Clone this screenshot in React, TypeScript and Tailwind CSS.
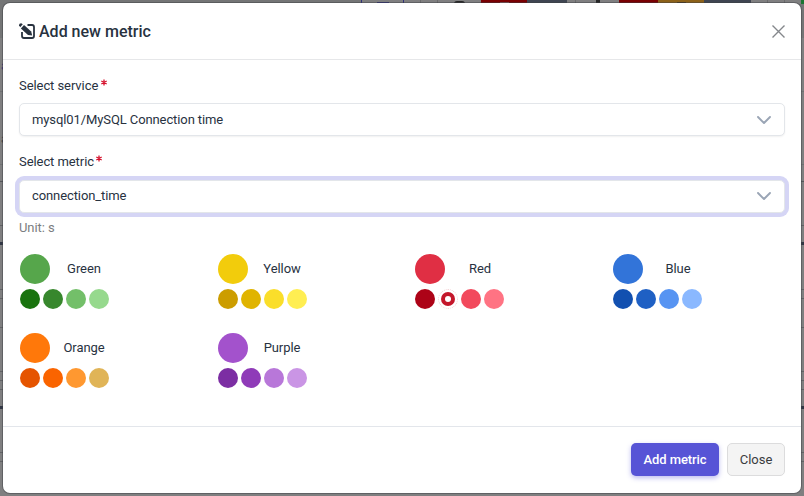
import type { ReactNode } from "react";

type Swatch = { name: string; main: string; shades: string[]; selected?: number };

const swatches: Swatch[] = [
  { name: "Green", main: "bg-[#56a64b]", shades: ["bg-[#19730e]", "bg-[#37872d]", "bg-[#73bf69]", "bg-[#96d98d]"] },
  { name: "Yellow", main: "bg-[#f2cc0c]", shades: ["bg-[#cc9d00]", "bg-[#e0b400]", "bg-[#fade2a]", "bg-[#ffee52]"] },
  { name: "Red", main: "bg-[#e02f44]", shades: ["bg-[#ad0317]", "bg-[#c4162a]", "bg-[#f2495c]", "bg-[#ff7383]"], selected: 1 },
  { name: "Blue", main: "bg-[#3274d9]", shades: ["bg-[#1250b0]", "bg-[#1f60c4]", "bg-[#5794f2]", "bg-[#8ab8ff]"] },
  { name: "Orange", main: "bg-[#ff780a]", shades: ["bg-[#e55400]", "bg-[#fa6400]", "bg-[#ff9830]", "bg-[#e0b457]"] },
  { name: "Purple", main: "bg-[#a352cc]", shades: ["bg-[#7c2ea3]", "bg-[#8f3bb8]", "bg-[#b877d9]", "bg-[#ca95e5]"] },
];

function Backdrop() {
  return (
    <div className="absolute inset-0 flex flex-col bg-[#7f7f80]">
      <div className="flex h-1 shrink-0">
        <div className="w-[361px] bg-[#747576]" />
        <div className="flex w-[43px] justify-center border-x border-[#30307a]">
          <span className="mt-[2px] h-[2px] w-[12px] bg-[#30307a]" />
        </div>
        <div className="w-[17px] border-r border-[#6b6b6c]" />
        <div className="w-[17px] border-r border-[#6b6b6c]" />
        <div className="flex w-[43px] justify-center">
          <span className="mt-px h-[3px] w-[11px] rounded-t-sm bg-[#272727]" />
        </div>
        <div className="flex w-[46px] justify-center bg-[#790002]">
          <span className="mt-[2px] h-[2px] w-[9px] bg-[#8f5a5b]" />
        </div>
        <div className="w-[40px] bg-[#3f4551]" />
        <div className="w-[9px] border-r border-[#6b6b6c]" />
        <div className="flex w-[43px] justify-center">
          <span className="h-1 w-[4px] bg-[#272727]" />
        </div>
        <div className="w-[39px] bg-[#790002]" />
        <div className="flex w-[46px] justify-center bg-[#8c6119]">
          <span className="mt-[2px] h-[2px] w-[9px] bg-[#4c3a1c]" />
        </div>
        <div className="w-[47px] bg-[#3f4551]" />
        <div className="w-[17px] border-r border-[#6b6b6c]" />
        <div className="w-[17px] border-r border-[#6b6b6c]" />
        <div className="flex grow justify-end">
          <span className="h-1 w-[3px] bg-[#1b7431]" />
        </div>
      </div>
      <div className="h-[34px] shrink-0 bg-[#747576]" />
      <div className="h-[54px] shrink-0 border-b border-[#707173] pl-px pt-[19px] text-[13px] leading-[18px] text-[#303079]">a</div>
      <div className="h-[73px] shrink-0 border-b border-[#707173] pl-px pt-[38px] text-[13px] leading-[18px] text-[#353c48]">a</div>
      <div className="h-[17px] shrink-0 border-b border-[#55575b]" />
      <div className="h-[44px] shrink-0 border-b border-[#606164]" />
      <div className="h-[19px] shrink-0 border-b-[3px] border-[#303644]" />
      <div className="h-[45px] shrink-0 border-b border-[#626366]" />
      <div className="h-[9px] shrink-0 border-b border-[#626366]" />
      <div className="h-[29px] shrink-0 border-b border-[#626366]" />
      <div className="h-[44px] shrink-0 border-b border-[#626366]" />
      <div className="h-[9px] shrink-0 border-b border-[#626366]" />
      <div className="h-[9px] shrink-0 border-b border-[#626366]" />
      <div className="h-[19px] shrink-0 border-b-[3px] border-[#303644]" />
      <div className="h-[44px] shrink-0 border-b border-[#626366]" />
      <div className="h-[9px] shrink-0 border-b border-[#626366]" />
    </div>
  );
}

function Label({ children }: { children: ReactNode }) {
  return (
    <div className="flex h-[18px] items-center leading-[18px] tracking-[-0.07px]">
      {children}
      <svg width="6" height="7" viewBox="0 0 6 7" className="-mt-[8px] ml-[2.5px]" stroke="#d6102c" strokeWidth="1.3">
        <path d="M3 .5v6M.3 2l5.4 3M.3 5l5.4-3" />
      </svg>
    </div>
  );
}

function Select({ value, focused }: { value: string; focused?: boolean }) {
  return (
    <div
      className={`flex h-[33px] items-center justify-between rounded-[5px] border border-[#e3e6ea] bg-white pl-3 pr-[13px] tracking-[-0.1px] ${
        focused ? "pb-[2px] shadow-[0_0_0_4px_#d5d5f5]" : "shadow-[0_1px_2px_rgba(0,0,0,0.06)]"
      }`}
    >
      <span>{value}</span>
      <svg width="14" height="8" viewBox="0 0 14 8" fill="none" stroke="#9aa5b5" strokeWidth="1.9" strokeLinecap="round" strokeLinejoin="round">
        <path d="M1 1l6 6 6-6" />
      </svg>
    </div>
  );
}

function ColorGroup({ swatch }: { swatch: Swatch }) {
  return (
    <div className="h-[79px]">
      <div className="flex items-center">
        <div className={`size-[30px] rounded-full ${swatch.main}`} />
        <div className={`ml-1 text-center tracking-[-0.07px] ${swatch.name === "Red" || swatch.name === "Blue" ? "w-[62px]" : "w-[60px]"}`}>
          {swatch.name}
        </div>
      </div>
      <div className="mt-[5px] flex gap-[3px]">
        {swatch.shades.map((shade, i) =>
          i === swatch.selected ? (
            <div key={shade} className="flex size-5 items-center justify-center rounded-full border border-dotted border-[#f3cdd1]">
              <div className={`flex size-[14px] items-center justify-center rounded-full ${shade}`}>
                <div className="size-[6px] rounded-full bg-white" />
              </div>
            </div>
          ) : (
            <div key={shade} className={`size-5 rounded-full ${shade}`} />
          ),
        )}
      </div>
    </div>
  );
}

export default function App() {
  return (
    <div className="relative h-[496px] w-[804px] overflow-hidden p-[3px] font-[Roboto,sans-serif] text-[13px] text-[#28323f]">
      <Backdrop />
      <div className="relative flex h-[490px] flex-col rounded-[7px] bg-white shadow-[0_0_0_1px_rgba(60,62,66,0.45)]">
        <header className="flex h-[57px] shrink-0 items-center border-b border-[#e6e7e9] pl-4 pr-4">
          <svg width="16" height="16" viewBox="0 0 16 16" fill="none">
            <path d="M8.5 2H13Q15 2 15 4V13Q15 15 13 15H5Q3 15 3 13V9" stroke="#28323f" strokeWidth="1.8" />
            <path d="M5 2 12.2 8.4 13.2 12.6 9 12 1.9 5.4z" fill="#28323f" />
            <path d="M0 2.2Q0 .3 2.2 .3L3.8 1.3 1.2 4.3z" fill="#28323f" />
          </svg>
          <h1 className="ml-1 mt-px text-[16px] font-medium leading-5">Add new metric</h1>
          <svg width="13" height="13" viewBox="0 0 13 13" fill="none" stroke="#84878b" strokeWidth="1.4" className="ml-auto">
            <path d="M.5.5l12 12M12.5.5l-12 12" />
          </svg>
        </header>
        <main className="flex grow flex-col px-4 pt-[17px]">
          <Label>Select service</Label>
          <div className="mt-2">
            <Select value="mysql01/MySQL Connection time" />
          </div>
          <div className="mt-[17px]">
            <Label>Select metric</Label>
          </div>
          <div className="mt-[9px]">
            <Select value="connection_time" focused />
          </div>
          <div className="mt-[5px] h-[20px] leading-[20px] tracking-[-0.07px] text-[#7b7d81]">Unit: s</div>
          <div className="ml-px mt-4 grid grid-cols-[198px_197px_198px_auto]">
            {swatches.map((swatch) => (
              <ColorGroup key={swatch.name} swatch={swatch} />
            ))}
          </div>
        </main>
        <footer className="flex h-[67px] shrink-0 items-center justify-end gap-2 border-t border-[#e3e6eb] px-4 pb-px">
          <button className="h-[33px] w-[88px] rounded-[5px] bg-[#5754d6] font-medium tracking-[-0.1px] text-white shadow-[0_2px_5px_rgba(87,84,214,0.4)]">Add metric</button>
          <button className="h-[33px] w-[58px] rounded-[5px] border border-[#dcdcdd] bg-[#f4f4f4] text-[#3a3c40]">Close</button>
        </footer>
      </div>
    </div>
  );
}
